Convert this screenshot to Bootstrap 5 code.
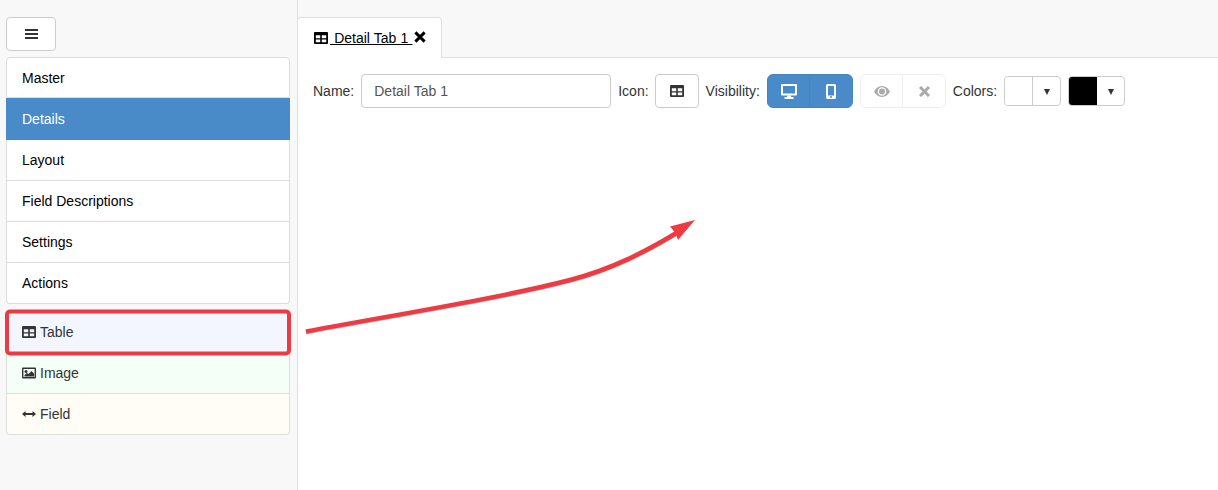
<!DOCTYPE html>
<html lang="en">

<head>
    <meta charset="UTF-8">
    <meta name="viewport" content="width=device-width, initial-scale=1.0">
    <title>Detail Tabs</title>
    <link href="https://cdn.jsdelivr.net/npm/bootstrap@5.3.0/dist/css/bootstrap.min.css" rel="stylesheet">
    <script src="https://cdn.jsdelivr.net/npm/bootstrap@5.3.0/dist/js/bootstrap.bundle.min.js"></script>
    <style>
        html, body { height: 100%; }
        body { background: #f8f8f8; font: 14px/20px "Liberation Sans", Arial, sans-serif; color: #333; overflow: hidden; }
        .app-shell { position: relative; height: 490px; }
        .side-col { width: 298px; flex: none; padding: 17px 7px 0 6px; border-right: 1px solid #e0e0e0; }
        .menu-btn { width: 50px; height: 34px; padding: 0; background: #fff; border: 1px solid #ccc; border-radius: 4px; color: #333; margin-bottom: 6px; display: block; }
        .side-list { --bs-list-group-border-color: #ddd; --bs-list-group-border-radius: 4px; }
        .side-list .list-group-item { height: 41px; padding: 10px 15px; font-size: 14px; line-height: 20px; color: #000; }
        .side-list .list-group-item.active { background: #498ac8; border-color: #498ac8; color: #fff; height: 42px; margin-top: 0; border-top-width: 0; padding-top: 11px; }
        .tool-list { margin-top: 7px; }
        .tool-list .list-group-item { color: #333; display: flex; align-items: center; gap: 4px; padding-top: 0; padding-bottom: 0; }
        .tool-list .list-group-item:first-child { height: 42px; }
        .tint-blue { background: #f3f6fe; }
        .tint-green { background: #f4fff7; }
        .tint-yellow { background: #fffdf6; }
        .main-col { flex: 1; min-width: 0; }
        .tab-strip { height: 41px; margin-top: 17px; padding: 0; border-bottom: 1px solid #e0e0e0; }
        .tab-face { height: 41px; width: 145px; background: #fff; border: 1px solid #e0e0e0; border-bottom: 0; border-radius: 4px 4px 0 0; margin-left: -1px; padding: 10px 0 0 16px; color: #000; display: flex; align-items: flex-start; }
        .tab-link { color: #000; text-decoration: underline; display: inline-flex; align-items: center; white-space: pre; word-spacing: .25px; }
        .tab-link svg { margin-right: 2px; }
        .tab-close { margin: 3px 0 0 2px; display: block; }
        .tool-pane { background: #fff; height: 432px; padding: 16px 15px; }
        .tool-bar { gap: 7px; height: 34px; }
        .tool-label { color: #333; }
        .label-tight { margin-right: -1px; }
        .name-input { width: 250px; height: 34px; padding: 6px 12px; font-size: 14px; line-height: 20px; color: #555; border: 1px solid #ccc; border-radius: 4px; box-shadow: none; }
        .icon-btn { width: 44px; height: 34px; padding: 0; background: #fff; border: 1px solid #ccc; border-radius: 4px; display: flex; align-items: center; justify-content: center; }
        .vis-btn { width: 43.5px; height: 34px; padding: 0; display: flex; align-items: center; justify-content: center; }
        .vis-on { background: #498ac8; border: 1px solid #4584c0; }
        .vis-off { background: #fff; border: 1px solid #eee; }
        .swatch-group { width: 57px; height: 30px; border: 1px solid #ccc; border-radius: 4px; overflow: hidden; display: flex; background: #fff; }
        .swatch-fill { width: 28px; height: 100%; border-right: 1px solid #ccc; background: #fff; }
        .swatch-black { background: #000; border-right-color: #000; }
        .swatch-caret { flex: 1; display: flex; align-items: center; justify-content: center; }
        .caret-shape { width: 0; height: 0; border-left: 3.5px solid transparent; border-right: 3.5px solid transparent; border-top: 6px solid #333; margin-top: 1px; }
        .mark-layer { position: absolute; left: 0; top: 0; pointer-events: none; }
    </style>
</head>

<body>
    <svg class="d-none">
        <symbol id="ico-table" viewBox="0 0 14 12">
            <path fill-rule="evenodd" d="M1 0h12a1 1 0 0 1 1 1v10a1 1 0 0 1-1 1H1a1 1 0 0 1-1-1V1a1 1 0 0 1 1-1zM1.800 3.300v2.900h4.400V3.300zM7.800 3.300v2.900h4.400V3.300zM1.800 7.400v2.800h4.400V7.400zM7.800 7.400v2.800h4.400V7.400z"/>
        </symbol>
    </svg>

    <div class="app-shell d-flex">
        <div class="side-col">
            <button class="menu-btn d-flex align-items-center justify-content-center" type="button" aria-label="Menu">
                <svg width="13" height="12" viewBox="0 0 13 12" fill="#333"><rect y="1" width="13" height="2"/><rect y="5" width="13" height="2"/><rect y="9" width="13" height="2"/></svg>
            </button>
            <div class="list-group side-list">
                <div class="list-group-item">Master</div>
                <div class="list-group-item active">Details</div>
                <div class="list-group-item">Layout</div>
                <div class="list-group-item">Field Descriptions</div>
                <div class="list-group-item">Settings</div>
                <div class="list-group-item">Actions</div>
            </div>
            <div class="list-group side-list tool-list">
                <div class="list-group-item tint-blue">
                    <svg width="14" height="12" fill="#333"><use href="#ico-table"/></svg>Table
                </div>
                <div class="list-group-item tint-green">
                    <svg width="14" height="12" viewBox="0 0 14 12" fill="#333"><path fill-rule="evenodd" d="M1 .5h12a1 1 0 0 1 1 1v9a1 1 0 0 1-1 1H1a1 1 0 0 1-1-1v-9a1 1 0 0 1 1-1zm.4 1.500v8h11.200V2z"/><circle cx="4" cy="4.500" r="1.500"/><path d="M2.500 9.500V8L5 6l1.500 1 3-3L12 6.500v3z"/></svg>Image
                </div>
                <div class="list-group-item tint-yellow">
                    <svg width="14" height="12" viewBox="0 0 14 12" fill="#333"><path d="M0 6l3.500-3v2h7V3L14 6l-3.500 3V7h-7v2z"/></svg>Field
                </div>
            </div>
        </div>

        <div class="main-col">
            <div class="tab-strip">
                <div class="tab-face">
                    <a class="tab-link" href="#"><svg width="14" height="12" fill="#000"><use href="#ico-table"/></svg> Detail Tab 1 </a>
                    <svg class="tab-close" width="12" height="12" viewBox="0 0 13 13" fill="none" stroke="#000" stroke-width="3.200"><path d="M1.500 1.500l10 10M11.500 1.500l-10 10"/></svg>
                </div>
            </div>
            <div class="tool-pane">
                <div class="tool-bar d-flex align-items-center">
                    <span class="tool-label">Name:</span>
                    <input class="form-control name-input" type="text" value="Detail Tab 1">
                    <span class="tool-label label-tight">Icon:</span>
                    <button class="icon-btn" type="button" aria-label="Icon">
                        <svg width="14" height="12" fill="#333"><use href="#ico-table"/></svg>
                    </button>
                    <span class="tool-label">Visibility:</span>
                    <div class="btn-group">
                        <button class="btn vis-btn vis-on" type="button" aria-label="Desktop">
                            <svg width="16" height="15" viewBox="0 0 16 15" fill="#fff"><path fill-rule="evenodd" d="M1 0h14a1 1 0 0 1 1 1v9.500a1 1 0 0 1-1 1H1a1 1 0 0 1-1-1V1a1 1 0 0 1 1-1zm1 2v7.500h12V2z"/><path d="M6 11.500h4v1.500h2.500v2h-9v-2H6z"/></svg>
                        </button>
                        <button class="btn vis-btn vis-on" type="button" aria-label="Mobile">
                            <svg width="10" height="15" viewBox="0 0 10 15" fill="#fff"><path fill-rule="evenodd" d="M1.500 0h7A1.500 1.500 0 0 1 10 1.500v12A1.500 1.500 0 0 1 8.500 15h-7A1.500 1.500 0 0 1 0 13.500v-12A1.500 1.500 0 0 1 1.500 0zM2 2v9.500h6V2zM5 12a1 1 0 1 0 0 2 1 1 0 0 0 0-2z"/></svg>
                        </button>
                    </div>
                    <div class="btn-group">
                        <button class="btn vis-btn vis-off" type="button" aria-label="Show">
                            <svg width="16" height="11" viewBox="0 0 16 11" fill="#aaa"><path fill-rule="evenodd" d="M8 0c3.500 0 6.300 2.300 8 5.500C14.300 8.700 11.500 11 8 11S1.700 8.700 0 5.500C1.700 2.300 4.500 0 8 0zm0 1.200a4.300 4.300 0 1 0 0 8.600 4.300 4.300 0 0 0 0-8.600z"/><circle cx="8" cy="5.500" r="3"/></svg>
                        </button>
                        <button class="btn vis-btn vis-off" type="button" aria-label="Hide">
                            <svg width="11" height="11" viewBox="0 0 11 11" fill="none" stroke="#aaa" stroke-width="3"><path d="M1 1l9 9M10 1l-9 9"/></svg>
                        </button>
                    </div>
                    <span class="tool-label">Colors:</span>
                    <div class="swatch-group">
                        <div class="swatch-fill"></div>
                        <div class="swatch-caret"><span class="caret-shape"></span></div>
                    </div>
                    <div class="swatch-group">
                        <div class="swatch-fill swatch-black"></div>
                        <div class="swatch-caret"><span class="caret-shape"></span></div>
                    </div>
                </div>
            </div>
        </div>

        <svg class="mark-layer" width="1218" height="490" viewBox="0 0 1218 490" fill="none">
            <rect x="7" y="311.500" width="282" height="42" rx="3" stroke="#ee3a43" stroke-width="4"/>
            <path d="M306 332.500C400 315 500 299 570 281C612 270 645 253 678 233" stroke="#888" stroke-width="4" opacity=".6"/>
            <path d="M306 331.500C400 314 500 298 570 280C612 269 645 252 678 232" stroke="#ee3a43" stroke-width="4.500"/>
            <path d="M695 220L670 226.500L675.500 233L678 240z" fill="#ee3a43"/>
        </svg>
    </div>
</body>

</html>
